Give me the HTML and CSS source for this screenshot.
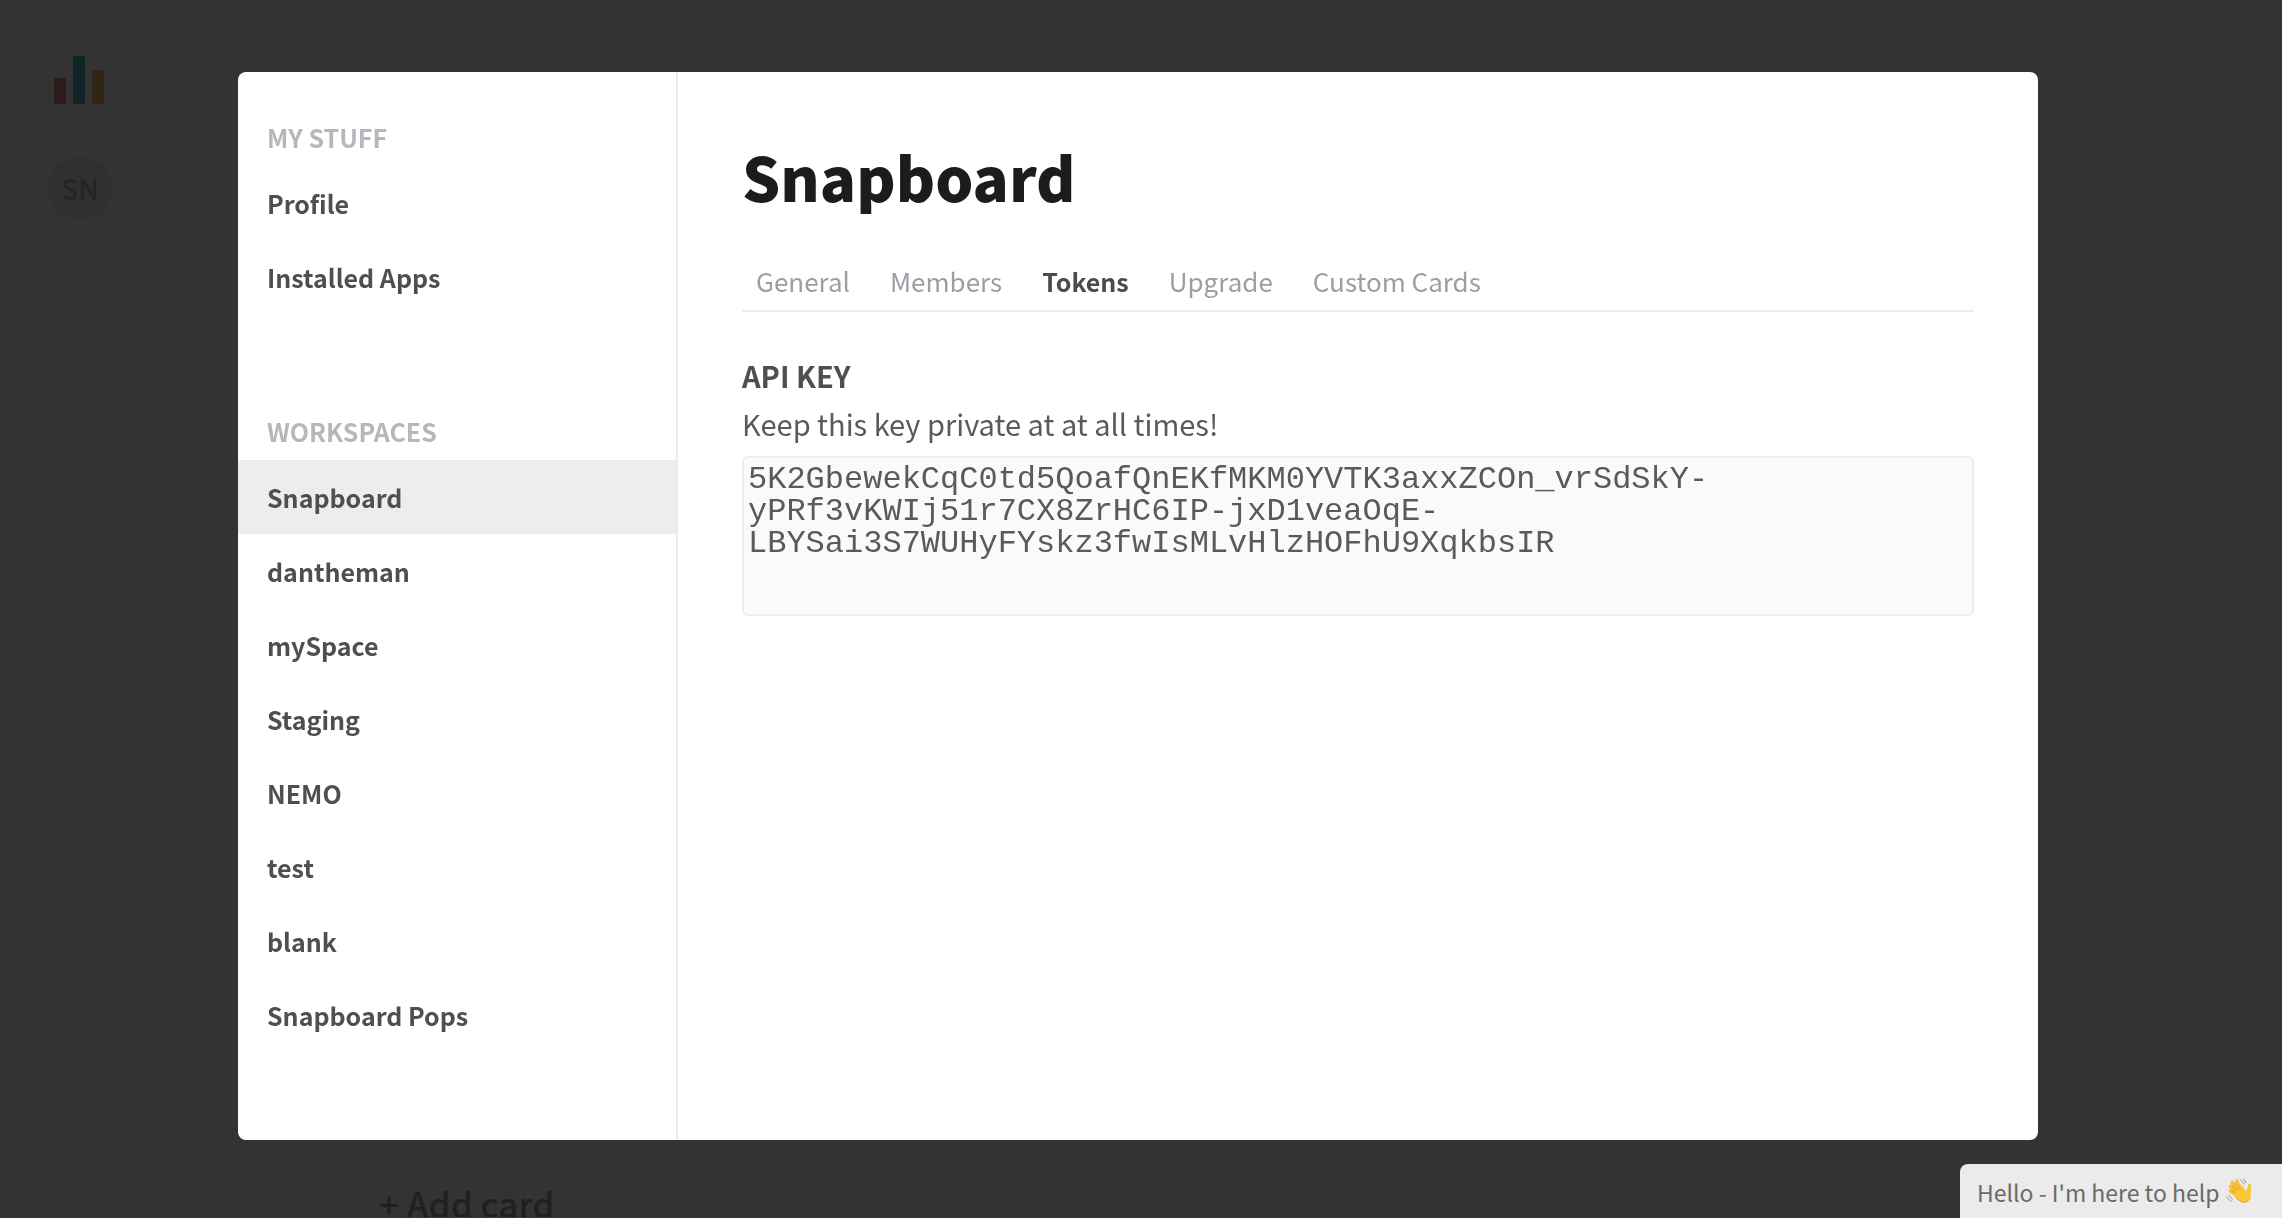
FILE: index.html
```html
<!DOCTYPE html>
<html lang="en">
<head>
<meta charset="utf-8">
<title>Snapboard – Workspace settings</title>
<link rel="stylesheet" href="styles.css">
</head>
<body>
<div class="app">
  <aside class="rail">
    <svg class="logo" viewBox="0 0 50 48" aria-hidden="true">
      <rect x="0" y="22" width="12" height="26" rx="2" fill="#2f1a1b"/>
      <rect x="19" y="0" width="12" height="48" rx="2" fill="#112428"/>
      <rect x="38" y="14" width="12" height="34" rx="2" fill="#302415"/>
    </svg>
    <button class="avatar" type="button">SN</button>
  </aside>
  <main class="board">
    <button class="add-card" type="button">+ Add card</button>
  </main>
</div>

<div class="overlay">
  <section class="modal" role="dialog" aria-labelledby="modal-title">
    <nav class="sidebar">
      <h2 class="group-title">MY STUFF</h2>
      <ul class="menu">
        <li><a class="menu-item" href="#profile">Profile</a></li>
        <li><a class="menu-item" href="#apps">Installed Apps</a></li>
      </ul>
      <h2 class="group-title">WORKSPACES</h2>
      <ul class="menu">
        <li><a class="menu-item active" href="#snapboard">Snapboard</a></li>
        <li><a class="menu-item" href="#dantheman">dantheman</a></li>
        <li><a class="menu-item" href="#myspace">mySpace</a></li>
        <li><a class="menu-item" href="#staging">Staging</a></li>
        <li><a class="menu-item" href="#nemo">NEMO</a></li>
        <li><a class="menu-item" href="#test">test</a></li>
        <li><a class="menu-item" href="#blank">blank</a></li>
        <li><a class="menu-item" href="#pops">Snapboard Pops</a></li>
      </ul>
    </nav>
    <div class="content">
      <h1 class="title" id="modal-title">Snapboard</h1>
      <nav class="tabs">
        <a class="tab" href="#general">General</a>
        <a class="tab" href="#members">Members</a>
        <a class="tab current" href="#tokens">Tokens</a>
        <a class="tab" href="#upgrade">Upgrade</a>
        <a class="tab" href="#cards">Custom Cards</a>
      </nav>
      <label class="field-label" for="api-key">API KEY</label>
      <p class="field-help">Keep this key private at at all times!</p>
      <textarea class="key" id="api-key" readonly spellcheck="false">5K2GbewekCqC0td5QoafQnEKfMKM0YVTK3axxZCOn_vrSdSkY-yPRf3vKWIj51r7CX8ZrHC6IP-jxD1veaOqE-LBYSai3S7WUHyFYskz3fwIsMLvHlzHOFhU9XqkbsIR</textarea>
    </div>
  </section>
</div>

<button class="chat" type="button">
  <span>Hello - I'm here to help</span>
  <svg class="wave" viewBox="0 0 26 26" aria-hidden="true">
    <g fill="none" stroke="#f9c031" stroke-linecap="round">
      <path d="M13 16 4.500 8.500" stroke-width="3.600"/>
      <path d="M14 14 6 4.500" stroke-width="3.600"/>
      <path d="M16 13 10.500 3" stroke-width="3.600"/>
      <path d="M12 18 4.500 13" stroke-width="3.400"/>
      <path d="M22 15 23.600 7.500" stroke-width="3"/>
    </g>
    <path d="M8 15 16.500 7.500 20 13.500 22.200 8.500 25 9 24.500 19Q22.500 25 17 24.500 13.500 24 8 18Z" fill="#fcc736"/>
    <path d="M10 19.500Q14 24 18 24.200 22.500 24 24.300 19.500" fill="none" stroke="#e8a11c"/>
    <path d="M6.300 7.600 12 13M9 5 14 11.500M5.500 11.800 10 15.500" fill="none" stroke="#dd981c" stroke-width="0.800"/>
    <path d="M14 1.500Q17 3 18 6M17 0.500Q19.500 2 20 5M1 19Q2 22 5.500 23.500M3 17.500Q4 20 6.500 21" fill="none" stroke="#949ba2" stroke-linecap="round"/>
  </svg>
</button>
</body>
</html>
```
FILE: styles.css
```css
* {
  box-sizing: border-box;
}

body {
  margin: 0;
  background: #333;
  color: #4c5053;
  font-family: "Noto Sans CJK SC", "Noto Sans", sans-serif;
  font-size: 26px;
}

h1, h2, p, ul {
  margin: 0;
  padding: 0;
}

button {
  border: 0;
  padding: 0;
  font: inherit;
}

a {
  color: inherit;
  text-decoration: none;
}

.app {
  display: flex;
  height: 100vh;
  overflow: hidden;
  border-bottom: 1px solid #3b3337;
}

.rail {
  width: 160px;
  padding: 56px 0 0 48px;
}

.logo {
  display: block;
  width: 50px;
  height: 48px;
  margin: 0 0 52px 6px;
}

.avatar {
  width: 64px;
  height: 64px;
  border-radius: 50%;
  background: #303030;
  color: #242424;
  font-size: 28px;
  font-weight: 500;
}

.board {
  display: flex;
  flex: 1;
  align-items: flex-end;
  padding-left: 219px;
}

.add-card {
  background: none;
  color: #202020;
  font-size: 35px;
  font-weight: 500;
  line-height: 28px;
}

.overlay {
  position: fixed;
  inset: 0;
  display: flex;
  padding: 72px 244px 78px 238px;
}

.modal {
  display: flex;
  flex: 1;
  overflow: hidden;
  border-radius: 8px;
  background: #fff;
}

.sidebar {
  flex: 0 0 440px;
  padding-top: 40px;
  border-right: 2px solid #ededed;
}

.group-title {
  padding: 6px 29px 10px;
  color: #b4b7bb;
  font-size: 25px;
  font-weight: 700;
  line-height: 38px;
}

.menu {
  list-style: none;
}

.menu + .group-title {
  margin-top: 92px;
}

.menu-item {
  display: block;
  padding: 18px 29px;
  font-size: 25px;
  font-weight: 700;
  line-height: 38px;
}

.active {
  background: #ededed;
}

.content {
  flex: 1;
  padding: 59px 64px 0;
}

.title {
  color: #1b1c1d;
  font-size: 60px;
  font-weight: 900;
  line-height: 90px;
}

.tabs {
  display: flex;
  gap: 12px;
  margin-top: 33px;
  border-bottom: 2px solid #ededed;
}

.tab {
  padding: 8px 14px 10px;
  color: #9a9fa6;
  line-height: 38px;
}

.current {
  color: #4a4c4e;
  font-size: 25px;
  font-weight: 700;
}

.field-label {
  display: block;
  margin-top: 39px;
  font-size: 29px;
  font-weight: 700;
  line-height: 48px;
}

.field-help {
  color: #5a5a5a;
  font-size: 29px;
  line-height: 48px;
}

.key {
  display: block;
  width: 100%;
  height: 160px;
  margin-top: 9px;
  padding: 6px 4px 2px;
  border: 2px solid #ededed;
  border-radius: 6px;
  background: #fafafa;
  color: #5a5a5a;
  font-family: "Courier New", "Liberation Mono", monospace;
  font-size: 32px;
  line-height: 32px;
  resize: none;
}

.chat {
  position: fixed;
  right: 0;
  bottom: 0;
  display: flex;
  align-items: center;
  gap: 6px;
  width: 322px;
  height: 54px;
  padding: 2px 0 0 17px;
  border-top-left-radius: 8px;
  background: #ebebeb;
  color: #6a6a6a;
  font-size: 23px;
}

.wave {
  width: 26px;
  height: 26px;
  margin-bottom: 3px;
}
```
